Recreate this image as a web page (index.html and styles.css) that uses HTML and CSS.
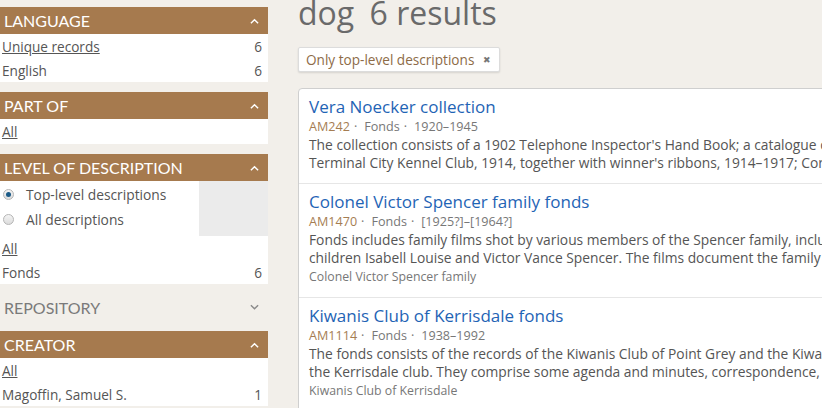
FILE: index.html
```html
<!DOCTYPE html>
<html lang="en">
<head>
<meta charset="utf-8">
<title>dog 6 results</title>
<link rel="stylesheet" href="styles.css">
</head>
<body>
<div class="page">
  <aside class="sidebar">
    <section class="facet">
      <h2 class="facet-head">Language <svg class="chev" viewBox="0 0 10 6"><path d="M1 5.5 L5 1.5 L9 5.5"/></svg></h2>
      <ul class="facet-list">
        <li><a href="#">Unique records</a><span class="count">6</span></li>
        <li><span>English</span><span class="count">6</span></li>
      </ul>
    </section>
    <section class="facet">
      <h2 class="facet-head">Part of <svg class="chev" viewBox="0 0 10 6"><path d="M1 5.5 L5 1.5 L9 5.5"/></svg></h2>
      <ul class="facet-list single">
        <li><a href="#">All</a></li>
      </ul>
    </section>
    <section class="facet">
      <h2 class="facet-head">Level of description <svg class="chev" viewBox="0 0 10 6"><path d="M1 5.5 L5 1.5 L9 5.5"/></svg></h2>
      <div class="radio-block">
        <div class="radios">
          <label class="radio"><span class="dot on"></span>Top-level descriptions</label>
          <label class="radio"><span class="dot"></span>All descriptions</label>
        </div>
        <div class="radio-fill"></div>
      </div>
      <ul class="facet-list">
        <li><a href="#">All</a></li>
        <li><span>Fonds</span><span class="count">6</span></li>
      </ul>
    </section>
    <section class="facet collapsed">
      <h2 class="facet-head">Repository <svg class="chev" viewBox="0 0 10 6"><path d="M1 1 L5 5 L9 1"/></svg></h2>
    </section>
    <section class="facet">
      <h2 class="facet-head">Creator <svg class="chev" viewBox="0 0 10 6"><path d="M1 5.5 L5 1.5 L9 5.5"/></svg></h2>
      <ul class="facet-list">
        <li><a href="#">All</a></li>
        <li><span>Magoffin, Samuel S.</span><span class="count">1</span></li>
      </ul>
    </section>
  </aside>

  <main class="main">
    <h1 class="title">dog <span class="count-title">6 results</span></h1>
    <div class="filters">
      <span class="tag">Only top-level descriptions <span class="x">&#x2716;</span></span>
    </div>
    <div class="results">
      <article class="result">
        <a class="r-title" href="#">Vera Noecker collection</a>
        <div class="meta"><span class="ref">AM242</span><span class="sep">·</span><span>Fonds</span><span class="sep">·</span><span>1920–1945</span></div>
        <p class="desc"><span>The collection consists of a 1902 Telephone Inspector's Hand Book; a catalogue of the annual show of the</span><span>Terminal City Kennel Club, 1914, together with winner's ribbons, 1914–1917; Correspondence and photographs</span></p>
      </article>
      <article class="result">
        <a class="r-title" href="#">Colonel Victor Spencer family fonds</a>
        <div class="meta"><span class="ref">AM1470</span><span class="sep">·</span><span>Fonds</span><span class="sep">·</span><span>[1925?]–[1964?]</span></div>
        <p class="desc"><span>Fonds includes family films shot by various members of the Spencer family, including Victor Spencer and his</span><span>children Isabell Louise and Victor Vance Spencer. The films document the family and their activities</span></p>
        <div class="creator">Colonel Victor Spencer family</div>
      </article>
      <article class="result">
        <a class="r-title" href="#">Kiwanis Club of Kerrisdale fonds</a>
        <div class="meta"><span class="ref">AM1114</span><span class="sep">·</span><span>Fonds</span><span class="sep">·</span><span>1938–1992</span></div>
        <p class="desc"><span>The fonds consists of the records of the Kiwanis Club of Point Grey and the Kiwanis Club of Kerrisdale, as</span><span>the Kerrisdale club. They comprise some agenda and minutes, correspondence, scrapbooks and photographs</span></p>
        <div class="creator">Kiwanis Club of Kerrisdale</div>
      </article>
    </div>
  </main>
</div>
</body>
</html>
```

FILE: styles.css
```css
* { box-sizing: border-box; }
html, body {
  margin: 0;
  padding: 0;
  background: #f2efea;
  overflow: hidden;
  width: 822px;
  height: 408px;
}
body {
  font-family: "Open Sans", Lato, sans-serif;
  color: #555;
}
.page {
  display: flex;
  width: 1100px;
}
.sidebar {
  width: 268px;
  flex: none;
  padding-top: 7px;
}
.facet { margin-bottom: 10px; }
.facet-head {
  margin: 0;
  height: 27px;
  background: #a67a4e;
  color: #fff;
  font-family: Lato, "Open Sans", sans-serif;
  font-size: 16px;
  font-weight: 400;
  text-transform: uppercase;
  display: flex;
  align-items: center;
  justify-content: space-between;
  padding: 0 9px 0 4px;
}
.chev {
  width: 9px;
  height: 6px;
  fill: none;
  stroke: #fff;
  stroke-width: 1.6;
}
.collapsed .facet-head {
  background: transparent;
  color: #7a7a7a;
  height: 26px;
}
.collapsed .chev { stroke: #8a8a8a; }
.collapsed { margin-bottom: 11px; margin-top: 3px; }
.facet-list {
  list-style: none;
  margin: 0;
  padding: 0;
  background: #fff;
}
.facet-list li {
  height: 24px;
  display: flex;
  align-items: center;
  justify-content: space-between;
  padding: 0 6px 0 2px;
  font-size: 13.6px;
  color: #555;
}
.facet-list.single li { height: 25px; }
.facet-list a { color: #555; text-decoration: underline; }
.count { color: #555; }
.radio-block {
  display: flex;
  height: 55px;
}
.radios {
  width: 199px;
  background: #fff;
  padding-top: 1px;
}
.radio-fill {
  flex: 1;
  background: #ebebeb;
}
.radio {
  display: flex;
  align-items: center;
  height: 25px;
  font-size: 13.8px;
  color: #555;
  padding-left: 3px;
}
.dot {
  width: 11px;
  height: 11px;
  border-radius: 50%;
  border: 1px solid #b5b5b5;
  background: linear-gradient(#f4f4f4, #dcdcdc);
  margin-right: 12px;
  position: relative;
}
.dot.on::after {
  content: "";
  position: absolute;
  left: 2px;
  top: 2px;
  width: 5px;
  height: 5px;
  border-radius: 50%;
  background: #1b5a86;
}
.main {
  margin-left: 30px;
  width: 700px;
}
.title {
  margin: 0;
  font-size: 32px;
  font-weight: 400;
  color: #6a6a6a;
  line-height: 34px;
  margin-top: -4px;
}
.count-title { margin-left: 7px; }
.filters {
  margin-top: 17px;
  height: 25px;
}
.tag {
  display: inline-flex;
  align-items: center;
  height: 25px;
  padding: 0 8px 0 7px;
  background: #fff;
  border: 1px solid #dcdcdc;
  border-radius: 2px;
  box-shadow: 0 1px 2px rgba(0,0,0,0.12);
  color: #8d6b47;
  font-size: 13.6px;
}
.tag .x {
  color: #777;
  font-size: 9px;
  margin-left: 9px;
}
.results {
  margin-top: 16px;
  background: #fff;
  border: 1px solid #cfcfcf;
  border-radius: 4px;
}
.result {
  padding: 7px 10px 11px;
  border-bottom: 1px solid #e6e6e6;
}
.r-title {
  display: block;
  font-size: 17px;
  line-height: 22px;
  color: #1f64b5;
  text-decoration: none;
}
.meta {
  font-size: 12.6px;
  line-height: 18px;
  color: #777;
}
.meta .ref { color: #a57d52; }
.meta .sep { margin: 0 7px 0 4px; }
.desc {
  margin: 0;
  font-size: 13.8px;
  line-height: 18px;
  color: #555;
}
.desc span { display: block; white-space: nowrap; }
.creator {
  font-size: 12.3px;
  line-height: 19px;
  color: #777;
}
```
